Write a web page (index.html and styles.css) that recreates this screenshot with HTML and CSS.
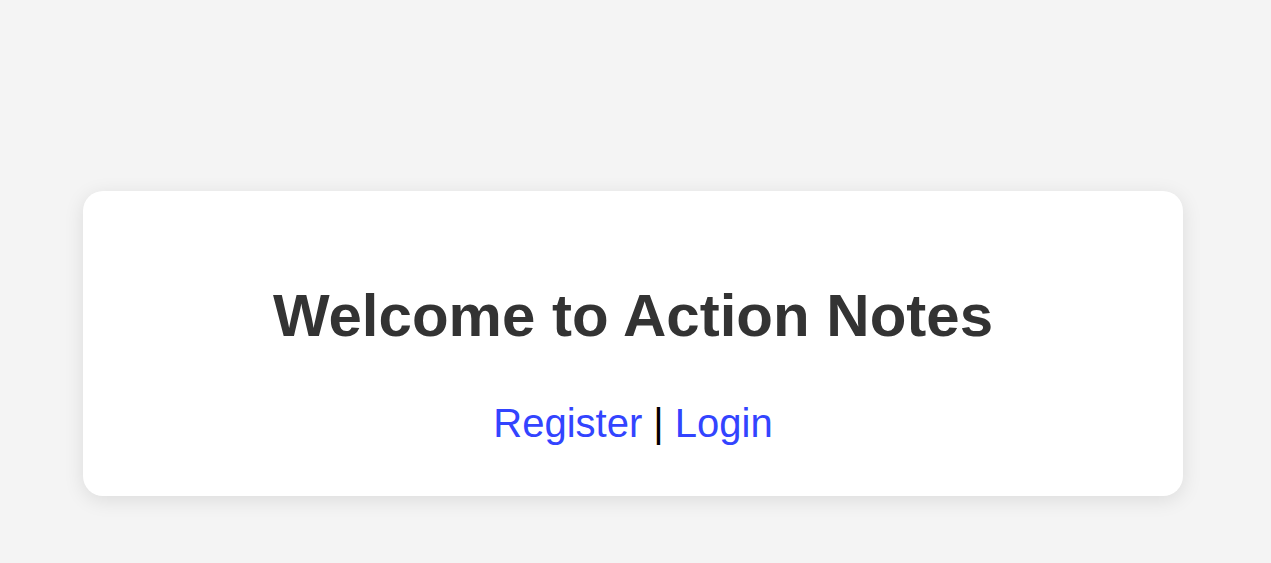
FILE: index.html
```html
<!DOCTYPE html>
<html lang="en">
<head>
<meta charset="utf-8">
<title>Action Notes</title>
<link rel="stylesheet" href="styles.css">
</head>
<body>
<main class="page">
  <section class="card">
    <h1 class="title">Welcome to Action Notes</h1>
    <p class="links"><a href="#" class="link">Register</a> | <a href="#" class="link">Login</a></p>
  </section>
</main>
</body>
</html>
```
FILE: styles.css
```css
html, body {
  margin: 0;
  padding: 0;
  background: #f4f4f4;
  font-family: "Liberation Sans", Arial, sans-serif;
}
.page {
  display: flex;
  justify-content: flex-start;
  padding: 191px 0 68px 83px;
}
.card {
  width: 1100px;
  box-sizing: border-box;
  background: #ffffff;
  border-radius: 20px;
  box-shadow: 0 4px 20px rgba(0, 0, 0, 0.1);
  padding: 90px 40px 50px;
  text-align: center;
}
.title {
  margin: 0 0 51px;
  font-size: 60px;
  font-weight: bold;
  color: #333333;
}
.links {
  margin: 0;
  font-size: 40px;
  color: #000;
}
.link {
  color: #3344ff;
  text-decoration: none;
}
```
